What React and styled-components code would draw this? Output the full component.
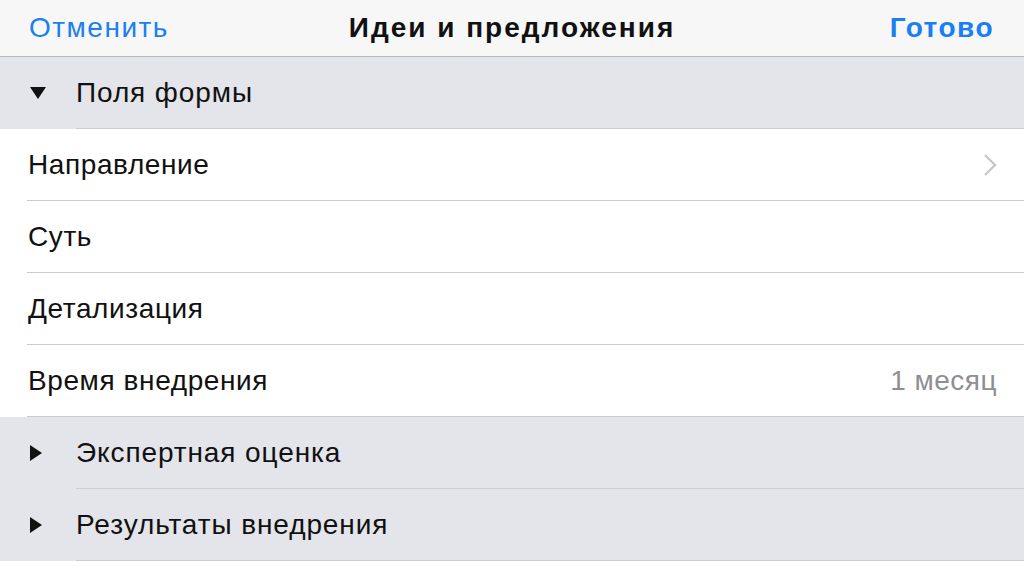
import React from 'react';
import styled, { createGlobalStyle } from 'styled-components';

const GlobalStyle = createGlobalStyle`
  html, body {
    margin: 0;
    padding: 0;
    background: #fff;
    font-family: "Liberation Sans", Arial, sans-serif;
    -webkit-font-smoothing: antialiased;
  }
`

const Page = styled.div`
  width: 1024px;
  height: 577px;
  overflow: hidden;
  background: #fff;
`

const NavBar = styled.div`
  height: 57px;
  display: flex;
  align-items: center;
  justify-content: space-between;
  padding: 0 30px 0 29px;
  box-sizing: border-box;
  background: #f7f7f7;
  border-bottom: 1px solid #b9b9bc;
  position: relative;
`

const NavButton = styled.span`
  color: #1a7ff2;
  font-size: 28px;
  letter-spacing: 1.5px;
  font-weight: ${p => (p.bold ? 700 : 400)};
`

const Title = styled.span`
  position: absolute;
  left: 0;
  right: 0;
  text-align: center;
  font-size: 28px;
  letter-spacing: 2px;
  font-weight: 700;
  color: #111;
  pointer-events: none;
`

const Section = styled.div`
  height: 72px;
  display: flex;
  align-items: center;
  background: #e3e5ea;
  position: relative;
  padding-left: 29px;
  box-sizing: border-box;

  &::after {
    content: '';
    position: absolute;
    left: 76px;
    right: 0;
    bottom: 0;
    height: 1px;
    background: #cdced3;
  }
`

const Arrow = styled.span`
  width: 47px;
  display: flex;
  align-items: center;
`

const SectionLabel = styled.span`
  font-size: 28px;
  letter-spacing: 0.9px;
  color: #111;
`

const Row = styled.div`
  height: 72px;
  display: flex;
  align-items: center;
  justify-content: space-between;
  padding: 0 27px 0 28px;
  box-sizing: border-box;
  position: relative;

  &::after {
    content: '';
    position: absolute;
    left: 27px;
    right: 0;
    bottom: 0;
    height: 1px;
    background: #cbcbce;
  }
`

const RowLabel = styled.span`
  font-size: 28px;
  letter-spacing: 0.6px;
  color: #111;
`

const RowValue = styled.span`
  font-size: 28px;
  letter-spacing: 0.5px;
  color: #8e8e93;
`

function Triangle({ open }) {
  return open ? (
    <svg width="18" height="14" viewBox="0 0 18 14">
      <path d="M1 1 L17 1 L9 13 Z" fill="#111" />
    </svg>
  ) : (
    <svg width="14" height="18" viewBox="0 0 14 18">
      <path d="M1 1 L13 9 L1 17 Z" fill="#111" />
    </svg>
  )
}

function Chevron() {
  return (
    <svg width="14" height="24" viewBox="0 0 14 24">
      <path d="M2 2 L12 12 L2 22" fill="none" stroke="#c7c7cc" strokeWidth="2.4" />
    </svg>
  )
}

const fields = [
  { label: 'Направление', chevron: true },
  { label: 'Суть' },
  { label: 'Детализация' },
  { label: 'Время внедрения', value: '1 месяц' },
]

export default function App() {
  return (
    <Page>
      <GlobalStyle />
      <NavBar>
        <NavButton>Отменить</NavButton>
        <Title>Идеи и предложения</Title>
        <NavButton bold>Готово</NavButton>
      </NavBar>
      <Section>
        <Arrow><Triangle open /></Arrow>
        <SectionLabel>Поля формы</SectionLabel>
      </Section>
      {fields.map(f => (
        <Row key={f.label}>
          <RowLabel>{f.label}</RowLabel>
          {f.chevron && <Chevron />}
          {f.value && <RowValue>{f.value}</RowValue>}
        </Row>
      ))}
      <Section>
        <Arrow><Triangle /></Arrow>
        <SectionLabel>Экспертная оценка</SectionLabel>
      </Section>
      <Section>
        <Arrow><Triangle /></Arrow>
        <SectionLabel>Результаты внедрения</SectionLabel>
      </Section>
    </Page>
  )
}
